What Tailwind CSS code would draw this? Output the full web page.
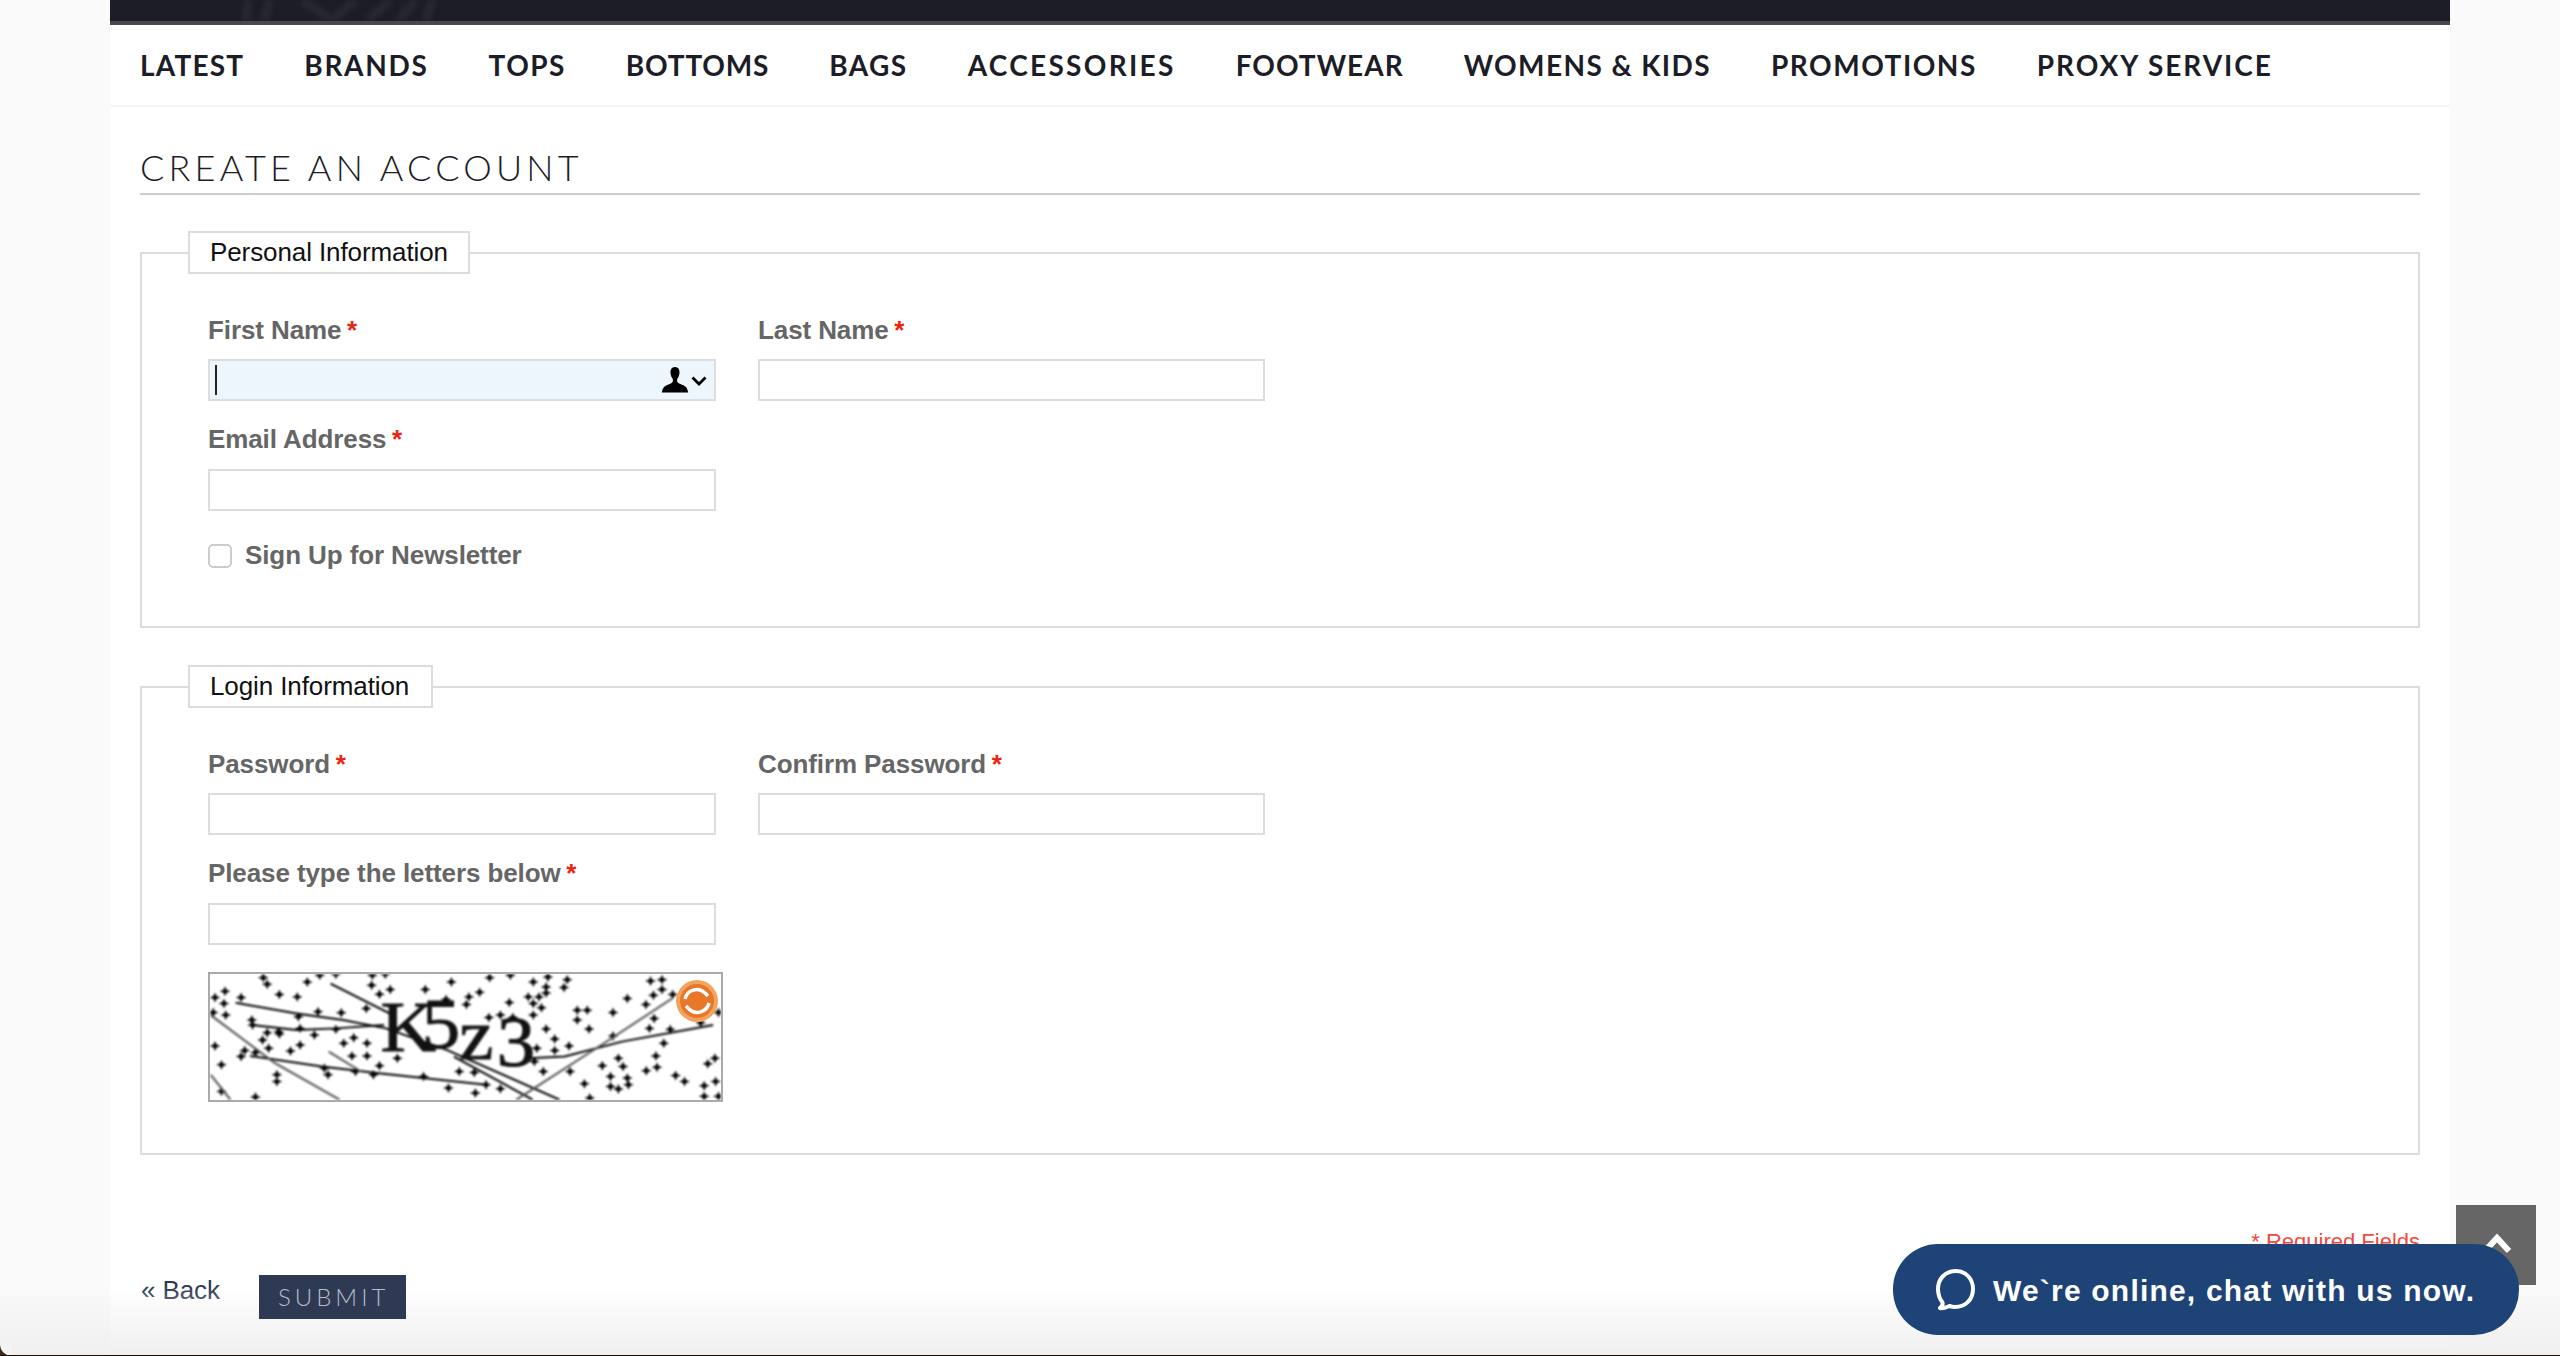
<!DOCTYPE html>
<html lang="en">
<head>
    <meta charset="UTF-8">
    <meta name="viewport" content="width=device-width, initial-scale=1.0">
    <title>Create an Account</title>
    <script src="https://cdn.jsdelivr.net/npm/@tailwindcss/browser@4"></script>
</head>
<body class="bg-[#fafafa] font-['Liberation_Sans',Arial,sans-serif]">
<div class="relative w-[2560px] h-[1356px] overflow-hidden">
    <div class="ml-[110px] w-[2340px] h-full bg-white">
        <!-- Top bar -->
        <div class="relative h-[25px] bg-[#1c1d27] border-b-4 border-[#474852] overflow-hidden">
            <svg class="absolute left-[130px] top-0 blur-[2px]" width="210" height="21" viewBox="0 0 210 21"><path d="M8 0 6 21M30 0 24 21M62 0 92 20 116 0M128 21 150 0M158 21 176 0M192 0 186 21" fill="none" stroke="#262732" stroke-width="9"/></svg>
        </div>

        <!-- Nav -->
        <nav class="h-[82px] px-[30px] flex items-center gap-[60px] border-b-2 border-[#f6f6f6] font-['Lato',sans-serif] font-bold text-[28px] text-[#1c1d27] leading-none whitespace-nowrap">
            <a href="#" class="tracking-[1.2px]">LATEST</a>
            <a href="#" class="tracking-[1.7px]">BRANDS</a>
            <a href="#" class="tracking-[1.45px]">TOPS</a>
            <a href="#" class="tracking-[0.8px]">BOTTOMS</a>
            <a href="#" class="tracking-[1.45px]">BAGS</a>
            <a href="#" class="tracking-[2.3px]">ACCESSORIES</a>
            <a href="#" class="tracking-[1px]">FOOTWEAR</a>
            <a href="#" class="tracking-[1.4px]">WOMENS &amp; KIDS</a>
            <a href="#" class="tracking-[1.5px]">PROMOTIONS</a>
            <a href="#" class="tracking-[1.95px]">PROXY SERVICE</a>
        </nav>

        <div class="px-[30px]">
            <h1 class="h-[88px] pt-[38px] border-b-2 border-[#cccccc] font-['Lato',sans-serif] font-light text-[36px] leading-[44px] tracking-[4.2px] text-[#1c1d27]">CREATE AN ACCOUNT</h1>

            <!-- Personal info -->
            <fieldset class="mt-[36px] m-0 border-2 border-[#dddddd] p-0 pb-[56px]">
                <legend class="ml-[46px] w-[282px] h-[43px] px-[20px] border-2 border-[#dddddd] bg-white text-[26px] leading-[39px] tracking-[-0.1px] text-[#111111] whitespace-nowrap">Personal Information</legend>
                <div class="pl-[66px]">
                    <div class="grid grid-cols-[508px_507px] gap-x-[42px] pt-[41px]">
                        <div>
                            <label class="block h-[30px] mb-[14px] text-[26px] leading-[30px] font-bold tracking-[-0.1px] text-[#666666]">First Name <span class="ml-[-1.5px] text-[#ee2211]">*</span></label>
                            <div class="relative h-[42px] border-2 border-[#dddddd] bg-[#edf5fd]">
                                <!-- caret -->
                                <span class="absolute left-[5px] top-[4px] w-[2px] h-[30px] bg-[#222222]"></span>
                                <svg class="absolute left-[451px] top-[6px]" width="28" height="26" viewBox="0 0 28 26"><path fill="#000" d="M14 0c-3.400 0-4.800 2.800-4.500 6 .2 2.200.9 4.200 2 5.500.5.6.6 2.600.1 3.400-.9 1.500-3.400 2.200-6 3.400C3.400 19.400 1.600 21 .8 25.500h26.400c-.8-4.500-2.600-6.100-4.800-7.200-2.600-1.200-5.100-1.900-6-3.400-.5-.8-.4-2.800.1-3.400 1.100-1.300 1.800-3.300 2-5.500C18.800 2.800 17.400 0 14 0z"/></svg>
                                <svg class="absolute left-[481px] top-[15px]" width="16" height="10" viewBox="0 0 16 10"><path d="M1.500 1.500 8 8l6.500-6.500" fill="none" stroke="#000" stroke-width="2.800"/></svg>
                            </div>
                        </div>
                        <div>
                            <label class="block h-[30px] mb-[14px] text-[26px] leading-[30px] font-bold tracking-[-0.1px] text-[#666666]">Last Name <span class="ml-[-1.5px] text-[#ee2211]">*</span></label>
                            <div class="h-[42px] border-2 border-[#dddddd] bg-white"></div>
                        </div>
                        <div class="mt-[23px]">
                            <label class="block h-[30px] mb-[15px] text-[26px] leading-[30px] font-bold tracking-[-0.1px] text-[#666666]">Email Address <span class="ml-[-1.5px] text-[#ee2211]">*</span></label>
                            <div class="h-[42px] border-2 border-[#dddddd] bg-white"></div>
                        </div>
                    </div>
                    <div class="mt-[29px] h-[30px] flex items-center gap-[13px]">
                        <span class="block w-[24px] h-[24px] mt-[2px] rounded-[5px] border-2 border-[#cccccc] bg-white"></span>
                        <span class="text-[26px] leading-[30px] font-bold tracking-[-0.1px] text-[#666666]">Sign Up for Newsletter</span>
                    </div>
                </div>
            </fieldset>

            <!-- Login info -->
            <fieldset class="mt-[37px] m-0 border-2 border-[#dddddd] p-0 pb-[51px]">
                <legend class="ml-[46px] w-[245px] h-[43px] px-[20px] border-2 border-[#dddddd] bg-white text-[26px] leading-[39px] tracking-[-0.1px] text-[#111111] whitespace-nowrap">Login Information</legend>
                <div class="pl-[66px]">
                    <div class="grid grid-cols-[508px_507px] gap-x-[42px] pt-[41px]">
                        <div>
                            <label class="block h-[30px] mb-[14px] text-[26px] leading-[30px] font-bold tracking-[-0.1px] text-[#666666]">Password <span class="ml-[-1.5px] text-[#ee2211]">*</span></label>
                            <div class="h-[42px] border-2 border-[#dddddd] bg-white"></div>
                        </div>
                        <div>
                            <label class="block h-[30px] mb-[14px] text-[26px] leading-[30px] font-bold tracking-[-0.1px] text-[#666666]">Confirm Password <span class="ml-[-1.5px] text-[#ee2211]">*</span></label>
                            <div class="h-[42px] border-2 border-[#dddddd] bg-white"></div>
                        </div>
                        <div class="mt-[23px]">
                            <label class="block h-[30px] mb-[15px] text-[26px] leading-[30px] font-bold tracking-[-0.1px] text-[#666666]">Please type the letters below <span class="ml-[-1.5px] text-[#ee2211]">*</span></label>
                            <div class="h-[42px] border-2 border-[#dddddd] bg-white"></div>
                        </div>
                    </div>
                    <!-- Captcha -->
                    <div class="relative mt-[27px] w-[515px] h-[130px] border-2 border-[#aaaaaa] bg-white overflow-hidden">
                        <svg class="block w-full h-full blur-[0.8px]" viewBox="58 41 1429 380" preserveAspectRatio="none">
                            <path id="captcha-dots" fill="#000"></path>
                            <g fill="none" stroke="#000" stroke-width="6">
                                <path d="M130 128 300 160 430 180 550 205 720 270 1035 420"/>
                                <path d="M175 195 300 210 410 205 545 195"/>
                                <path d="M395 70 560 160"/>
                                <path d="M170 288 370 320 530 340 830 375"/>
                                <path d="M950 295 1050 290 1210 245 1465 195"/>
                                <path d="M740 290 960 420"/>
                            </g>
                            <g fill="none" stroke="#555" stroke-width="6">
                                <path d="M60 165 240 310 420 420"/>
                                <path d="M390 275 480 335"/>
                                <path d="M915 420 1160 250 1350 115"/>
                                <path d="M60 345 115 420"/>
                            </g>
                            <text x="535 650 755 860" y="272 264 298 318" fill="#111" stroke="#111" stroke-width="3" font-family="'Liberation Serif',serif" font-size="215">K5z3</text>
                        </svg>
                        <svg class="absolute left-[465px] top-[5px] blur-[0.5px]" width="44" height="44" viewBox="0 0 44 44">
                            <circle cx="22" cy="22" r="21" fill="#f2a35e"/>
                            <circle cx="22" cy="22" r="17" fill="#e8772a"/>
                            <path d="M10 20a12 12 0 0 1 20-6l3 3" fill="none" stroke="#fff" stroke-width="3.500"/>
                            <path d="M34 24a12 12 0 0 1-20 6l-3-3" fill="none" stroke="#fff" stroke-width="3.500"/>
                        </svg>
                    </div>
                </div>
            </fieldset>

            <p class="mt-[72px] text-right text-[22px] leading-[30px] text-[#f04a3c]">* Required Fields</p>

            <div class="mt-[18px] flex items-start">
                <a href="#" class="ml-[1px] text-[26px] leading-[30px] tracking-[-0.1px] text-[#2e3a54]">« Back</a>
                <button class="relative z-10 ml-[39px] w-[147px] h-[44px] pl-[19px] text-left bg-[#2e3a54] font-['Lato',sans-serif] font-light text-[24px] leading-[44px] tracking-[4px] text-[#b8bcc6]">SUBMIT</button>
            </div>
        </div>
    </div>

    <!-- Bottom fade -->
    <div class="absolute left-0 right-0 bottom-0 h-[70px] bg-gradient-to-t from-[#efefef] to-transparent pointer-events-none"></div>

    <!-- Scroll to top -->
    <div class="absolute left-[2456px] top-[1205px] w-[80px] h-[80px] bg-[#666666]">
        <svg class="absolute left-[26px] top-[28px]" width="30" height="22" viewBox="0 0 30 22"><path d="M3 18 15 5l12 13" fill="none" stroke="#fff" stroke-width="6"/></svg>
    </div>

    <!-- Chat -->
    <div class="absolute left-[1893px] top-[1244px] w-[626px] h-[91px] rounded-[45px] bg-[#1e4477] flex items-center pl-[43px] gap-[17px]">
        <svg width="40" height="42" viewBox="0 0 40 42"><path d="M4 39c1.500-1 3-3 2.500-5.500C3 29 2 25 2 20 2 10 9 2 20 2c10 0 17 8 17 18 0 11-8 18-18 18-2 0-4-.5-5.500-1-2 1-6 3-9.500 2z" fill="none" stroke="#fff" stroke-width="4" stroke-linejoin="round"/></svg>
        <span class="mt-[2px] text-[30px] font-bold leading-none tracking-[1.2px] text-white whitespace-nowrap">We`re online, chat with us now.</span>
    </div>

    <!-- Window corner -->
    <div class="absolute left-0 bottom-0 w-[12px] h-[12px] bg-[#3d2a12]"><div class="w-full h-full rounded-bl-[12px] bg-[#f4f4f4]"></div></div>
    <div class="absolute left-0 right-0 bottom-0 h-[1px] bg-[#1a1208]"></div>
</div>

<script>
    // Captcha speckle: little plus marks, coordinates in the svg's viewBox
    const captchaDots = [[72,112],[100,93],[97,130],[145,112],[67,157],[102,165],[207,52],[218,72],[252,103],[302,110],[330,65],[365,45],[410,42],[512,45],[510,75],[548,42],[562,88],[532,102],[660,88],[733,65],[812,96],[782,110],[775,133],[718,118],[840,52],[898,45],[962,65],[1003,50],[1057,58],[1048,82],[998,80],[998,98],[948,110],[978,110],[895,127],[962,130],[985,143],[962,165],[1085,150],[1113,150],[1085,180],[1185,157],[1290,62],[1322,58],[1322,88],[1298,105],[1352,103],[1225,115],[1277,133],[1480,157],[1430,188],[1300,175],[870,165],[905,172],[838,172],[998,207],[1118,207],[1022,237],[1062,258],[972,265],[1022,272],[1185,228],[1287,205],[1327,250],[1345,208],[72,258],[205,240],[218,218],[252,222],[350,225],[222,265],[155,272],[145,290],[185,278],[283,273],[310,255],[432,250],[460,233],[497,250],[455,288],[497,288],[582,295],[90,315],[245,345],[245,365],[378,325],[388,345],[465,335],[515,345],[532,318],[655,350],[755,335],[797,338],[725,385],[830,375],[870,387],[965,305],[990,335],[1065,335],[1155,318],[1178,350],[1213,320],[1225,355],[1228,375],[1178,380],[1200,388],[1200,295],[1278,333],[1305,288],[1308,322],[1450,312],[1470,295],[1360,347],[1385,365],[1472,365],[1440,378],[1440,410],[1480,410],[1105,372],[1120,415],[800,400],[185,412],[90,395],[175,180],[177,195],[305,170],[360,155],[425,158],[495,145],[310,205],[410,208],[250,215]];
    document.getElementById('captcha-dots').setAttribute('d', captchaDots.map(([x, y]) =>
        `M${x} ${y - 15}L${x + 4.5} ${y - 4.5}L${x + 15} ${y}L${x + 4.5} ${y + 4.5}L${x} ${y + 15}L${x - 4.5} ${y + 4.5}L${x - 15} ${y}L${x - 4.5} ${y - 4.5}Z`
    ).join(''));
</script>
</body>
</html>
